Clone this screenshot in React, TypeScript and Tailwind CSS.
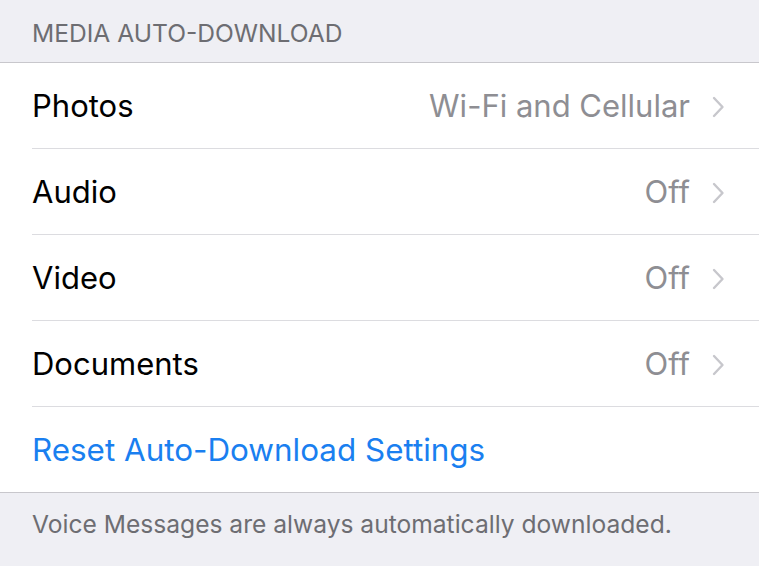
import React from "react";

type Row = { label: string; value: string };

const rows: Row[] = [
  { label: "Photos", value: "Wi-Fi and Cellular" },
  { label: "Audio", value: "Off" },
  { label: "Video", value: "Off" },
  { label: "Documents", value: "Off" },
];

function Chevron() {
  return (
    <svg width="13" height="22" viewBox="0 0 13 22" className="ml-[22px]" aria-hidden>
      <path d="M2 2 L10.5 11 L2 20" fill="none" stroke="#c7c7cc" strokeWidth="2.4" strokeLinecap="round" strokeLinejoin="round" />
    </svg>
  );
}

export default function App() {
  return (
    <div className="min-h-[566px] bg-[#efeff4] font-['Inter',sans-serif]">
      {/* Section header */}
      <div className="h-[62px] flex items-center pt-[4px] pl-8 text-[24.6px] leading-none text-[#6d6d72]">
        MEDIA AUTO-DOWNLOAD
      </div>

      {/* Group */}
      <div className="bg-white border-y border-[#c8c7cc]">
        {rows.map((row) => (
          <div key={row.label} className="pl-8">
            <div className="h-[86px] flex items-center pt-[2px] pr-[34px] border-b border-[#dcdce0]">
              <span className="flex-1 text-[31px] text-black">{row.label}</span>
              <span className="text-[31px] text-[#8e8e93]">{row.value}</span>
              <Chevron />
            </div>
          </div>
        ))}
        <div className="h-[85px] flex items-center pt-[2px] pl-8 text-[31.4px] text-[#1a7ff0]">
          Reset Auto-Download Settings
        </div>
      </div>

      {/* Footer */}
      <div className="pl-8 pt-[13px] text-[24.6px] text-[#6d6d72]">
        Voice Messages are always automatically downloaded.
      </div>
    </div>
  );
}
